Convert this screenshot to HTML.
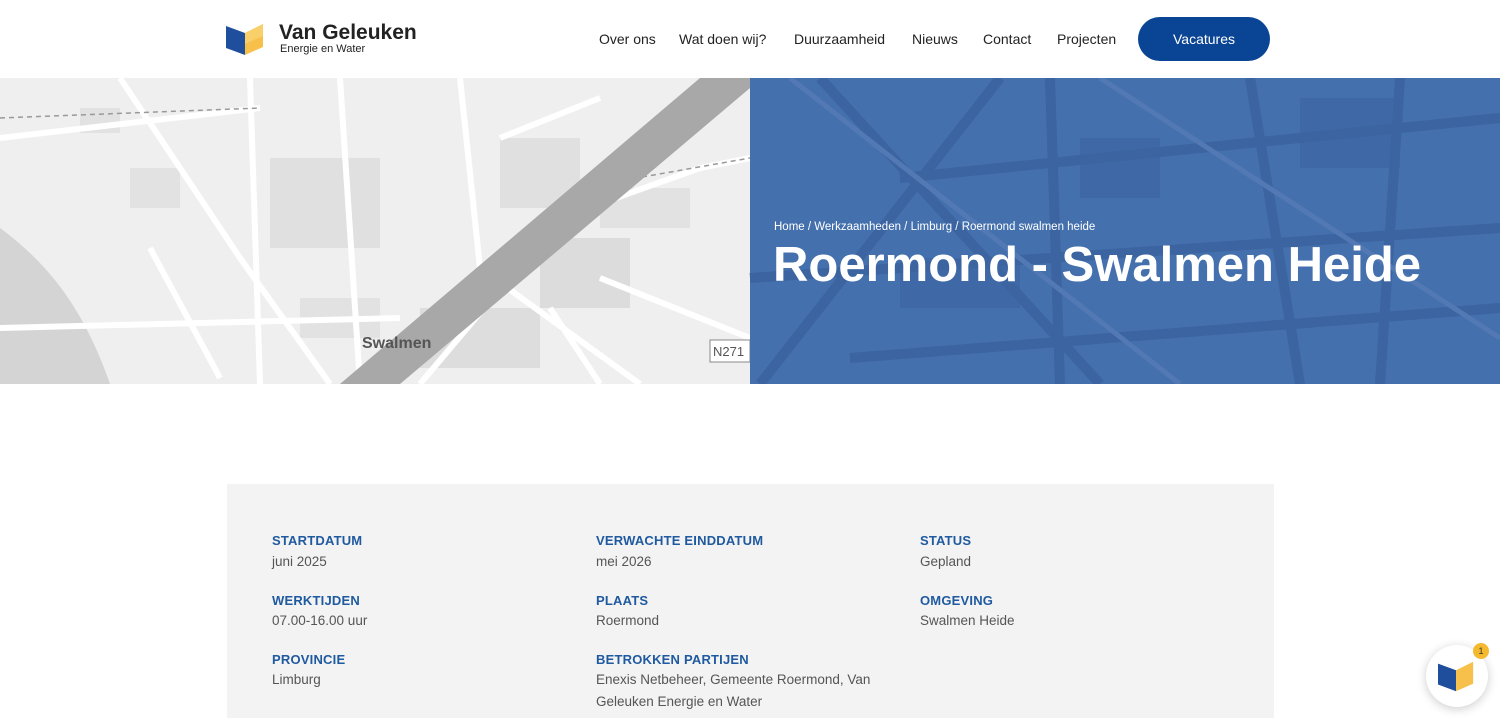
<!DOCTYPE html>
<html><head><meta charset="utf-8"><style>
*{margin:0;padding:0;box-sizing:border-box}
html,body{width:1500px;height:718px;overflow:hidden}
body{background:#fff;font-family:"Liberation Sans",sans-serif;position:relative}
.hdr{height:78px;position:relative}
.nav{position:absolute;top:31px;font-size:14px;color:#222}
.btn{position:absolute;left:1138px;top:17px;width:132px;height:44px;border-radius:22px;background:#0a4494;color:#fff;font-size:14px;text-align:center;line-height:44px}
.hero{position:absolute;top:78px;left:0;width:1500px;height:306px}
.box{position:absolute;left:227px;top:484px;width:1047px;height:234px;background:#f3f3f3}
.lab{position:absolute;font-size:13px;font-weight:bold;color:#1f5aa0;letter-spacing:.2px}
.val{position:absolute;font-size:13.5px;color:#555;line-height:22px}
</style></head><body>
<div class="hdr">
<svg style="position:absolute;left:226px;top:22px" width="40" height="34" viewBox="0 0 40 34"><polygon points="0,4 19,11 19,33 0,26" fill="#1f4e9c"/><polygon points="19,11 37,2 37,25 19,33" fill="#f7c04a"/><polygon points="19,11 37,2 37,14 19,22" fill="#f9cf6a"/></svg>
<div style="position:absolute;left:279px;top:21px;font-size:21px;font-weight:bold;color:#222">Van Geleuken</div>
<div style="position:absolute;left:280px;top:43px;font-size:11px;color:#222">Energie en Water</div>
<div class="nav" style="left:599px">Over ons</div>
<div class="nav" style="left:679px">Wat doen wij?</div>
<div class="nav" style="left:794px">Duurzaamheid</div>
<div class="nav" style="left:912px">Nieuws</div>
<div class="nav" style="left:983px">Contact</div>
<div class="nav" style="left:1057px">Projecten</div>
<div class="btn">Vacatures</div>
</div>
<svg class="hero" viewBox="0 0 1500 306">
<rect width="750" height="306" fill="#efefef"/>
<path d="M0,150 C40,180 80,220 110,306 L0,306Z" fill="#d4d4d4"/>
<rect x="270" y="80" width="110" height="90" fill="#e0e0e0"/><rect x="500" y="60" width="80" height="70" fill="#e0e0e0"/><rect x="540" y="160" width="90" height="70" fill="#dcdcdc"/>
<rect x="80" y="30" width="40" height="25" fill="#e2e2e2"/><rect x="130" y="90" width="50" height="40" fill="#e2e2e2"/><rect x="420" y="230" width="120" height="60" fill="#dddddd"/><rect x="600" y="110" width="90" height="40" fill="#e2e2e2"/><rect x="300" y="220" width="80" height="40" fill="#e2e2e2"/>
<path d="M120,0 L240,180 L330,306 M0,60 L260,30 M250,0 L260,306 M340,0 L360,306 M460,0 L480,190 M420,306 L560,140 L700,90 L750,80 M480,190 L640,306 M600,200 L750,260 M0,250 L400,240 M500,60 L600,20 M150,170 L220,300 M550,230 L600,306" stroke="#fff" stroke-width="6" fill="none"/>
<path d="M0,40 L260,30 M580,110 L750,80" stroke="#999" stroke-width="1.5" stroke-dasharray="5 4" fill="none"/>
<path d="M340,306 L700,0 L750,0 L750,10 L400,306Z" fill="#a8a8a8"/>
<text x="362" y="270" font-size="16" font-weight="bold" fill="#555" font-family="Liberation Sans">Swalmen</text>
<rect x="710" y="262" width="40" height="22" fill="#fff" stroke="#888"/><text x="713" y="278" font-size="13" fill="#555" font-family="Liberation Sans">N271</text>
<rect x="750" width="750" height="306" fill="#4470ad"/>
<rect x="1080" y="60" width="80" height="60" fill="#3f69a6"/><rect x="1300" y="20" width="100" height="70" fill="#3f69a6"/><rect x="900" y="180" width="120" height="50" fill="#3f69a6"/>
<path d="M760,306 L1000,0 M820,0 L1100,306 M900,100 L1500,40 M750,200 L1500,150 M1050,0 L1060,306 M1250,0 L1300,306 M1400,0 L1380,306 M850,280 L1500,230" stroke="#3b64a0" stroke-width="10" fill="none"/>
<path d="M790,0 L1180,306 M1100,0 L1500,260" stroke="#5279b3" stroke-width="5" fill="none"/>
</svg>
<div style="position:absolute;left:774px;top:221px;font-size:11.5px;color:#fff">Home / Werkzaamheden / Limburg / Roermond swalmen heide</div>
<div style="position:absolute;left:773px;top:237px;font-size:49px;font-weight:bold;color:#fff;white-space:nowrap">Roermond - Swalmen Heide</div>
<div class="box"></div>
<div class="lab" style="left:272px;top:533px">STARTDATUM</div><div class="val" style="left:272px;top:551px">juni 2025</div>
<div class="lab" style="left:596px;top:533px">VERWACHTE EINDDATUM</div><div class="val" style="left:596px;top:551px">mei 2026</div>
<div class="lab" style="left:920px;top:533px">STATUS</div><div class="val" style="left:920px;top:551px">Gepland</div>
<div class="lab" style="left:272px;top:593px">WERKTIJDEN</div><div class="val" style="left:272px;top:610px">07.00-16.00 uur</div>
<div class="lab" style="left:596px;top:593px">PLAATS</div><div class="val" style="left:596px;top:610px">Roermond</div>
<div class="lab" style="left:920px;top:593px">OMGEVING</div><div class="val" style="left:920px;top:610px">Swalmen Heide</div>
<div class="lab" style="left:272px;top:652px">PROVINCIE</div><div class="val" style="left:272px;top:669px">Limburg</div>
<div class="lab" style="left:596px;top:652px">BETROKKEN PARTIJEN</div><div class="val" style="left:596px;top:669px;width:300px">Enexis Netbeheer, Gemeente Roermond, Van Geleuken Energie en Water</div>
<div style="position:absolute;left:1426px;top:645px;width:62px;height:62px;border-radius:50%;background:#fff;box-shadow:0 2px 10px rgba(0,0,0,.2)"></div>
<svg style="position:absolute;left:1438px;top:657px" width="38" height="38" viewBox="0 0 40 34"><polygon points="0,4 19,11 19,33 0,26" fill="#1f4e9c"/><polygon points="19,11 37,2 37,25 19,33" fill="#f7c04a"/></svg>
<div style="position:absolute;left:1473px;top:643px;width:16px;height:16px;border-radius:50%;background:#f5b92e;color:#333;font-size:9px;text-align:center;line-height:16px">1</div>
</body></html>
